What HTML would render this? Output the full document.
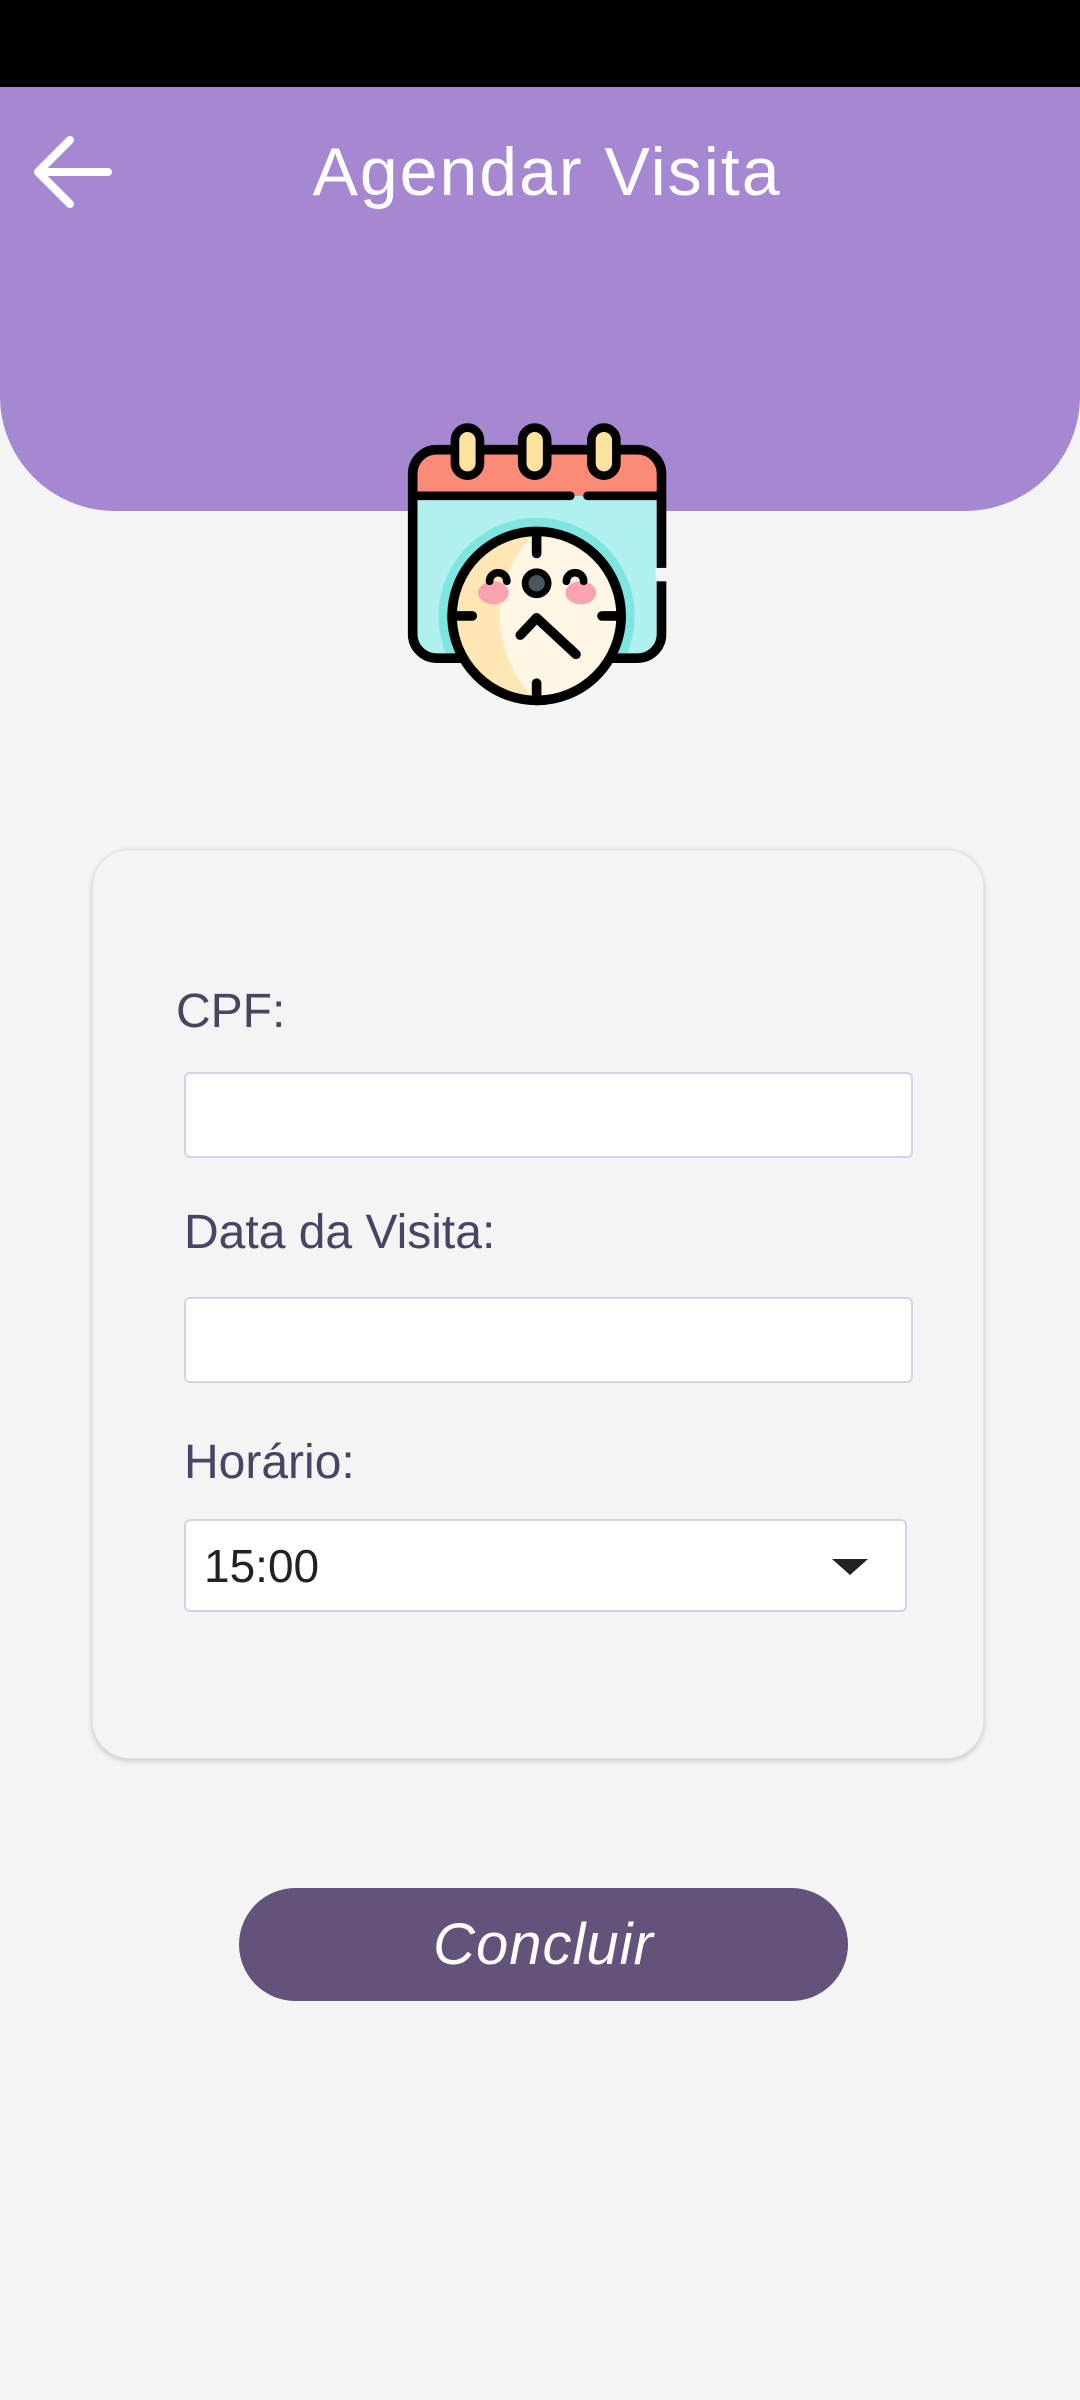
<!DOCTYPE html>
<html><head><meta charset="utf-8">
<style>
*{margin:0;padding:0;box-sizing:border-box}
body{width:1080px;height:2400px;background:#f4f4f4;position:relative;overflow:hidden;font-family:"Liberation Sans",sans-serif}
.status{position:absolute;left:0;top:0;width:1080px;height:88px;background:#000}
.header{position:absolute;left:0;top:87px;width:1080px;height:424px;background:#a688d2;border-radius:0 0 115px 115px}
.title{position:absolute;left:0;width:1094px;top:133px;text-align:center;color:#fff;font-size:68px;font-weight:300;letter-spacing:2px}
.card{position:absolute;left:92px;top:849px;width:892px;height:910px;background:#f4f4f4;border-radius:38px;box-shadow:0 2px 6px rgba(0,0,0,.18);border:1px solid #e2e0e6}
.lbl{position:absolute;color:#4a4462;font-size:48px}
.inp{position:absolute;left:184px;width:729px;height:86px;background:#fff;border:2px solid #d6d0ea;border-radius:6px}
.sel{position:absolute;left:184px;top:1519px;width:723px;height:93px;background:#fff;border:2px solid #d6d0ea;border-radius:6px}
.sel span{position:absolute;left:18px;top:18px;font-size:46px;color:#222}
.sel i{position:absolute;left:646px;top:38px;width:0;height:0;border-left:18px solid transparent;border-right:18px solid transparent;border-top:16px solid #222}
.btn{position:absolute;left:239px;top:1888px;width:609px;height:113px;background:#635279;border-radius:57px;color:#fff;font-style:italic;font-size:58px;text-align:center;line-height:113px;letter-spacing:1px}
</style></head><body>
<div class="status"></div>
<div class="header"></div>
<svg style="position:absolute;left:30px;top:132px" width="84" height="80" viewBox="0 0 84 80"><path d="M78 40H10M40 8L8 40L40 72" fill="none" stroke="#fff" stroke-width="8" stroke-linecap="round" stroke-linejoin="round"/></svg>
<div class="title">Agendar Visita</div>

<svg style="position:absolute;left:405px;top:416px" width="269" height="298" viewBox="0 0 280 310">
<defs><clipPath id="b"><rect x="8" y="35" width="259" height="217" rx="25"/></clipPath><clipPath id="c"><circle cx="137" cy="208" r="88"/></clipPath></defs>
<rect x="8" y="35" width="259" height="217" rx="25" fill="#b0f0ee"/>
<g clip-path="url(#b)"><circle cx="137" cy="208" r="102" fill="#7ee5e0"/><rect x="0" y="30" width="280" height="53" fill="#fb8a76"/></g>
<rect x="8" y="35" width="259" height="217" rx="25" fill="none" stroke="#000" stroke-width="10"/>
<path d="M10 83H172M190 83H265" stroke="#000" stroke-width="9" stroke-linecap="round"/>
<rect x="261" y="158" width="14" height="14" fill="#f4f4f4"/>
<g fill="#fde39d" stroke="#000" stroke-width="9"><rect x="52" y="12" width="26" height="50" rx="13"/><rect x="122" y="12" width="26" height="50" rx="13"/><rect x="194" y="12" width="26" height="50" rx="13"/></g>
<circle cx="137" cy="208" r="88" fill="#fff6e5"/>
<g clip-path="url(#c)"><path d="M137 120A88 88 0 0 0 137 296A120 120 0 0 1 137 120Z" fill="#ffe7b5"/></g>
<circle cx="137" cy="208" r="88" fill="none" stroke="#000" stroke-width="10"/>
<path d="M137 125V143M137 278V296M52 208H70M205 208H223M120 228L137 210L178 248" stroke="#000" stroke-width="10" stroke-linecap="round" stroke-linejoin="round" fill="none"/>
<ellipse cx="92" cy="184" rx="16" ry="12" fill="#f9a3b0"/><ellipse cx="183" cy="184" rx="16" ry="12" fill="#f9a3b0"/>
<path d="M88 172a9 9 0 0 1 18 0M168 172a9 9 0 0 1 18 0" stroke="#000" stroke-width="8" fill="none" stroke-linecap="round"/>
<circle cx="137" cy="174" r="12" fill="#4a5560" stroke="#000" stroke-width="7"/>
</svg>

<div class="card"></div>
<div class="lbl" style="left:176px;top:984px">CPF:</div>
<div class="inp" style="top:1072px"></div>
<div class="lbl" style="left:184px;top:1205px">Data da Visita:</div>
<div class="inp" style="top:1297px"></div>
<div class="lbl" style="left:184px;top:1435px">Horário:</div>
<div class="sel"><span>15:00</span><i></i></div>
<div class="btn">Concluir</div>
</body></html>
